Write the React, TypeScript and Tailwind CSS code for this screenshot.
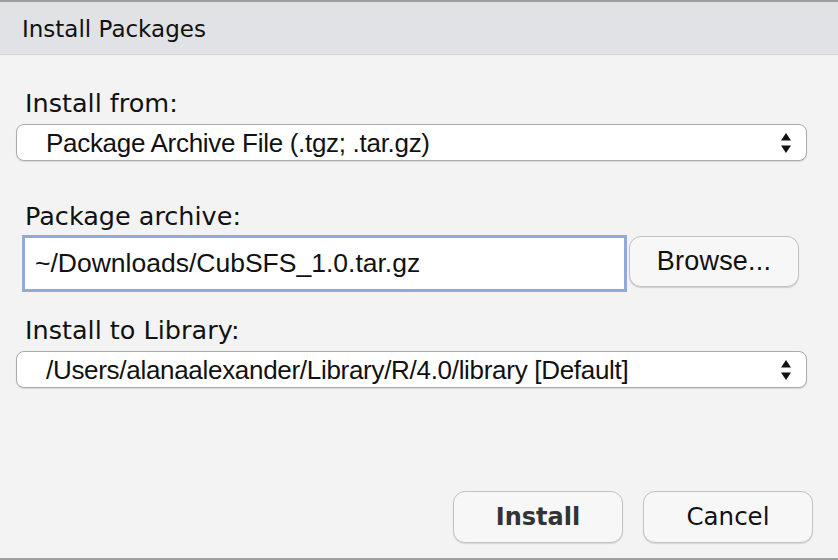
import React from "react";

const lucida = { fontFamily: '"DejaVu Sans", "Noto Sans", sans-serif' };
const helv = { fontFamily: '"Liberation Sans", Arial, sans-serif' };

function Arrows() {
  return (
    <svg width="12" height="22" viewBox="0 0 12 22" className="shrink-0">
      <path d="M6 1 L11 8.5 L1 8.5 Z" fill="#111" />
      <path d="M6 21 L11 13.5 L1 13.5 Z" fill="#111" />
    </svg>
  );
}

function Select({ text }: { text: string }) {
  return (
    <div className="ml-[16px] w-[791px] h-[37px] rounded-[8px] border border-[#acacac] bg-white shadow-[0_1px_1px_rgba(0,0,0,0.12)] flex items-center pl-[29px] pr-[14px]">
      <span className="flex-1 text-[26px] tracking-[-0.3px] text-[#111] leading-none whitespace-nowrap" style={helv}>
        {text}
      </span>
      <Arrows />
    </div>
  );
}

function Label({ text }: { text: string }) {
  return (
    <div className="ml-[25px] h-[30px] text-[25.5px] leading-[30px] text-[#111] whitespace-nowrap" style={lucida}>
      {text}
    </div>
  );
}

export default function App() {
  return (
    <div className="w-[838px] h-[560px] bg-[#f2f3f2] flex flex-col overflow-hidden relative">
      <div className="h-[2px] bg-[#9e9e9e] shrink-0" />
      <div className="h-[53px] bg-[#e1e2e5] border-b border-[#d4d5d7] shrink-0 flex items-center pl-[22px]">
        <span className="text-[23px] text-[#111] leading-none mt-[2px]" style={lucida}>
          Install Packages
        </span>
      </div>
      <div className="flex flex-col">
        <div className="h-[33px]" />
        <Label text="Install from:" />
        <div className="h-[6px]" />
        <Select text="Package Archive File (.tgz; .tar.gz)" />
        <div className="h-[40px]" />
        <Label text="Package archive:" />
        <div className="h-[4px]" />
        <div className="flex items-start">
          <div className="ml-[22px] w-[605px] h-[57px] border-[3px] border-[#8eabdc] bg-white flex items-center pl-[10px]">
            <span className="text-[26.5px] text-[#111] leading-none whitespace-nowrap" style={helv}>
              ~/Downloads/CubSFS_1.0.tar.gz
            </span>
          </div>
          <div className="ml-[2px] mt-[1px] w-[170px] h-[51px] rounded-[12px] border border-[#c2c2c2] bg-[#f7f7f8] shadow-[0_1px_1px_rgba(0,0,0,0.15)] flex items-center justify-center">
            <span className="text-[27px] tracking-[0.2px] text-[#111] leading-none" style={helv}>
              Browse...
            </span>
          </div>
        </div>
        <div className="h-[23px]" />
        <Label text="Install to Library:" />
        <div className="h-[6px]" />
        <Select text="/Users/alanaalexander/Library/R/4.0/library [Default]" />
        <div className="h-[103px]" />
        <div className="flex">
          <div className="ml-[453px] w-[170px] h-[52px] rounded-[12px] border border-[#c2c2c2] bg-[#f7f7f8] shadow-[0_1px_1px_rgba(0,0,0,0.12)] flex items-center justify-center">
            <span className="text-[24px] font-bold text-[#333] leading-none" style={lucida}>
              Install
            </span>
          </div>
          <div className="ml-[20px] w-[170px] h-[52px] rounded-[12px] border border-[#c2c2c2] bg-[#f7f7f8] shadow-[0_1px_1px_rgba(0,0,0,0.12)] flex items-center justify-center">
            <span className="text-[24.5px] text-[#111] leading-none" style={lucida}>
              Cancel
            </span>
          </div>
        </div>
      </div>
      <div className="absolute left-0 right-0 bottom-0 h-[2px] bg-[#9e9e9e]" />
    </div>
  );
}
